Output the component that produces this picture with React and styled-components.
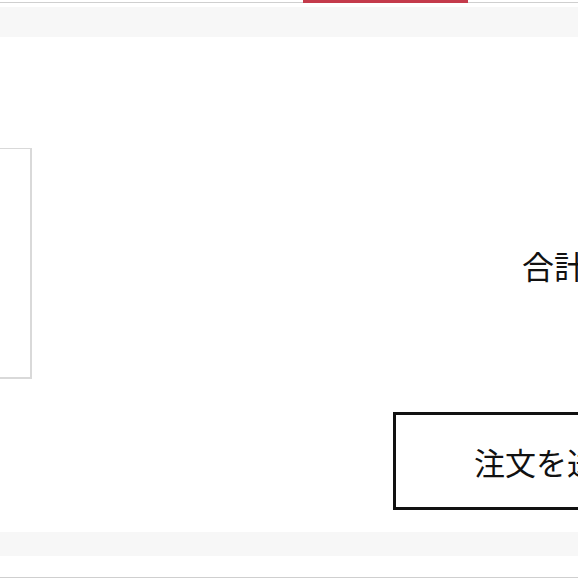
import React from "react";
import styled, { createGlobalStyle } from "styled-components";

const GlobalStyle = createGlobalStyle`
  html, body {
    margin: 0;
    padding: 0;
    background: #ffffff;
    overflow: hidden;
  }
  body {
    font-family: "Noto Sans CJK JP", "Noto Sans", sans-serif;
    color: #111;
  }
`;

function App() {
  return (
    <>
      <GlobalStyle />
      <Page>
        <TabStrip>
          <TabIndicator />
        </TabStrip>
        <Band $height={30} $top={4} />
        <Main>
          <ItemBox />
          <Summary>
            <TotalRow>
              <TotalLabel>合計</TotalLabel>
            </TotalRow>
            <SubmitButton>注文を送信する</SubmitButton>
          </Summary>
        </Main>
        <Band $height={24} $top={0} />
        <Footer />
      </Page>
    </>
  );
}

const Page = styled.div`
  width: 578px;
  height: 578px;
  overflow: hidden;
  display: flex;
  flex-direction: column;
`;

const TabStrip = styled.div`
  position: relative;
  height: 2px;
  border-bottom: 1px solid #cfcfcf;
  flex-shrink: 0;
`;

const TabIndicator = styled.div`
  position: absolute;
  left: 303px;
  top: 0;
  width: 165px;
  height: 3px;
  background: #c43a4b;
`;

const Band = styled.div`
  height: ${(p) => p.$height}px;
  margin-top: ${(p) => p.$top}px;
  background: #f7f7f7;
  flex-shrink: 0;
`;

const Main = styled.div`
  height: 495px;
  flex-shrink: 0;
  display: flex;
  align-items: flex-start;
`;

const ItemBox = styled.div`
  margin-top: 111px;
  margin-left: -169px;
  width: 198px;
  height: 228px;
  border: 1px solid #d9d9d9;
  border-width: 1px 2px 2px 1px;
  flex-shrink: 0;
`;

const Summary = styled.div`
  margin-left: 361px;
  display: flex;
  flex-direction: column;
  flex-shrink: 0;
`;

const TotalRow = styled.div`
  margin-top: 206px;
  padding-left: 129px;
  height: 44px;
  display: flex;
  align-items: center;
`;

const TotalLabel = styled.span`
  font-size: 32px;
  line-height: 44px;
  white-space: nowrap;
`;

const SubmitButton = styled.button`
  margin-top: 125px;
  width: 420px;
  height: 98px;
  box-sizing: border-box;
  border: 3px solid #111;
  background: #fff;
  font-family: "Noto Sans CJK JP", "Noto Sans", sans-serif;
  font-size: 31px;
  color: #111;
  text-align: left;
  padding: 0 0 0 78px;
  white-space: nowrap;
`;

const Footer = styled.div`
  flex: 1;
  border-bottom: 1px solid #cfcfcf;
`;

export default App;
